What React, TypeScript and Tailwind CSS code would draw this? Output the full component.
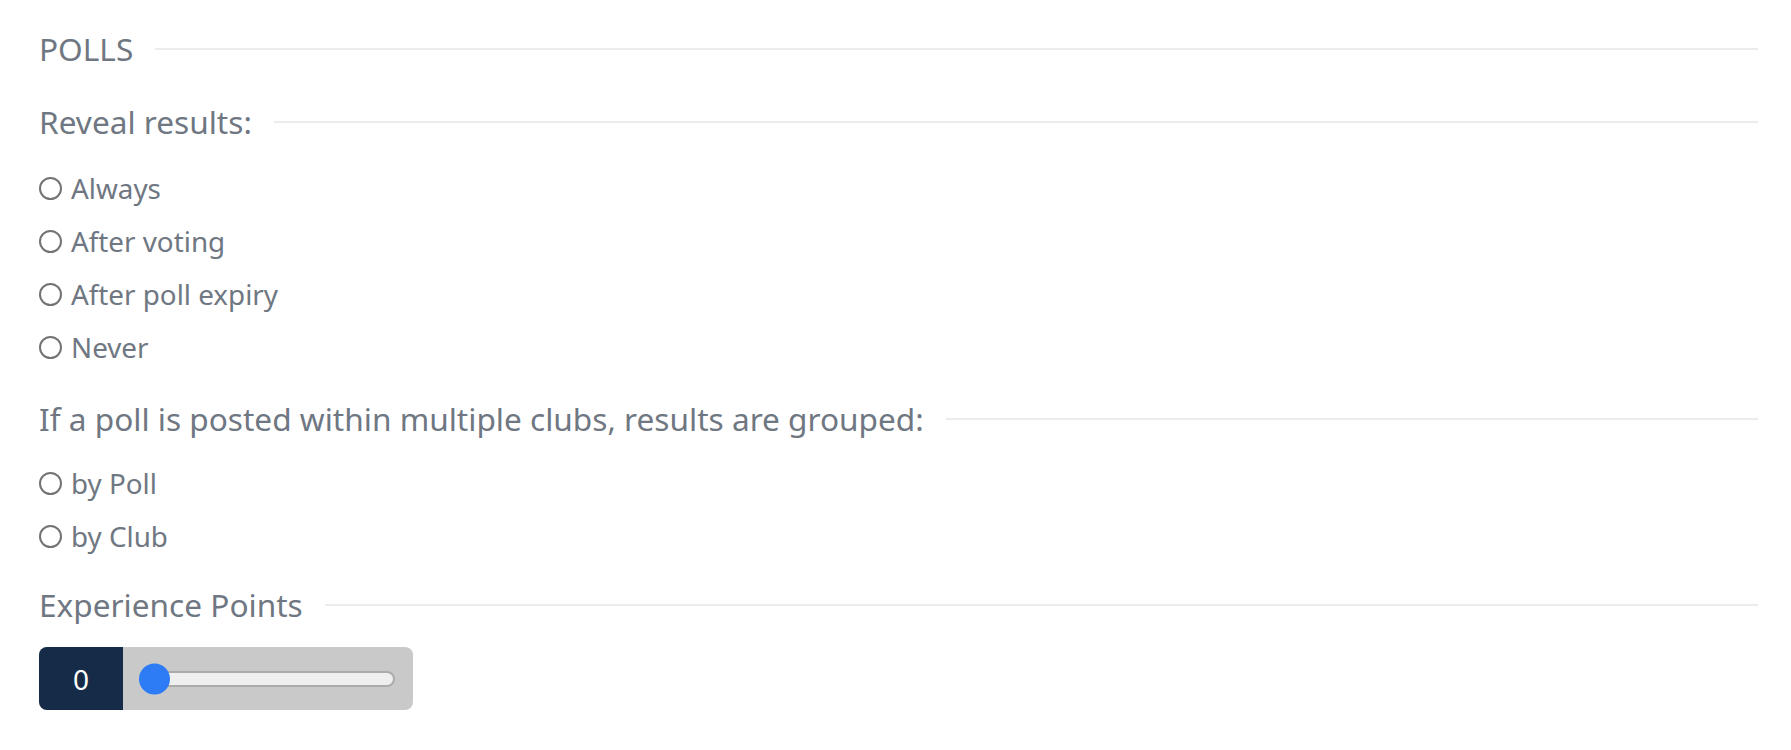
import { useState } from 'react';

const revealOptions = ['Always', 'After voting', 'After poll expiry', 'Never'];
const groupOptions = ['by Poll', 'by Club'];

function SectionTitle({ children, className = '' }: { children: React.ReactNode; className?: string }) {
  return (
    <div className={`flex items-center gap-[22px] h-[40px] ${className}`}>
      <span className="text-[31.6px] leading-[40px] text-[#6f7782] whitespace-nowrap">{children}</span>
      <div className="flex-1 h-[2px] bg-[#ececec]" />
    </div>
  );
}

function RadioRow({ label, checked, onSelect }: { label: string; checked: boolean; onSelect: () => void }) {
  return (
    <label className="flex items-center gap-[9px] h-[36px] cursor-pointer" onClick={onSelect}>
      <span className="w-[23px] h-[23px] rounded-full border-2 border-[#737373] bg-white flex items-center justify-center shrink-0">
        {checked && <span className="w-[11px] h-[11px] rounded-full bg-[#737373]" />}
      </span>
      <span className="text-[27.8px] leading-[36px] text-[#6f7782]">{label}</span>
    </label>
  );
}

function XpSlider() {
  const [value] = useState(0);
  return (
    <div className="flex w-[374px] h-[63px] rounded-[8px] overflow-hidden bg-[#c9c9c9]">
      <div className="w-[84px] bg-[#162b48] flex items-center justify-center text-white text-[28px]">{value}</div>
      <div className="flex-1 flex items-center pl-[16px] pr-[18px]">
        <div className="relative flex-1 h-[16px] rounded-full border-2 border-[#ababab] bg-[#efefef]">
          {/* thumb */}
          <div className="absolute left-[-2px] top-1/2 -translate-y-1/2 w-[31px] h-[31px] rounded-full bg-[#2e7bf6]" />
        </div>
      </div>
    </div>
  );
}

export default function App() {
  const [reveal, setReveal] = useState<string | null>(null);
  const [group, setGroup] = useState<string | null>(null);

  return (
    <div className="min-h-[750px] bg-white pl-[39px] pr-[33px] pt-[29px]" style={{ fontFamily: '"Noto Sans", "Open Sans", sans-serif' }}>
      <SectionTitle>POLLS</SectionTitle>
      <SectionTitle className="mt-[33px]">Reveal results:</SectionTitle>

      <div className="mt-[28px] flex flex-col gap-[17px]">
        {revealOptions.map((o) => (
          <RadioRow key={o} label={o} checked={reveal === o} onSelect={() => setReveal(o)} />
        ))}
      </div>

      <SectionTitle className="mt-[34px]">If a poll is posted within multiple clubs, results are grouped:</SectionTitle>

      <div className="mt-[26px] flex flex-col gap-[17px]">
        {groupOptions.map((o) => (
          <RadioRow key={o} label={o} checked={group === o} onSelect={() => setGroup(o)} />
        ))}
      </div>

      <SectionTitle className="mt-[31px]">Experience Points</SectionTitle>

      <div className="mt-[22px]">
        <XpSlider />
      </div>
    </div>
  );
}
